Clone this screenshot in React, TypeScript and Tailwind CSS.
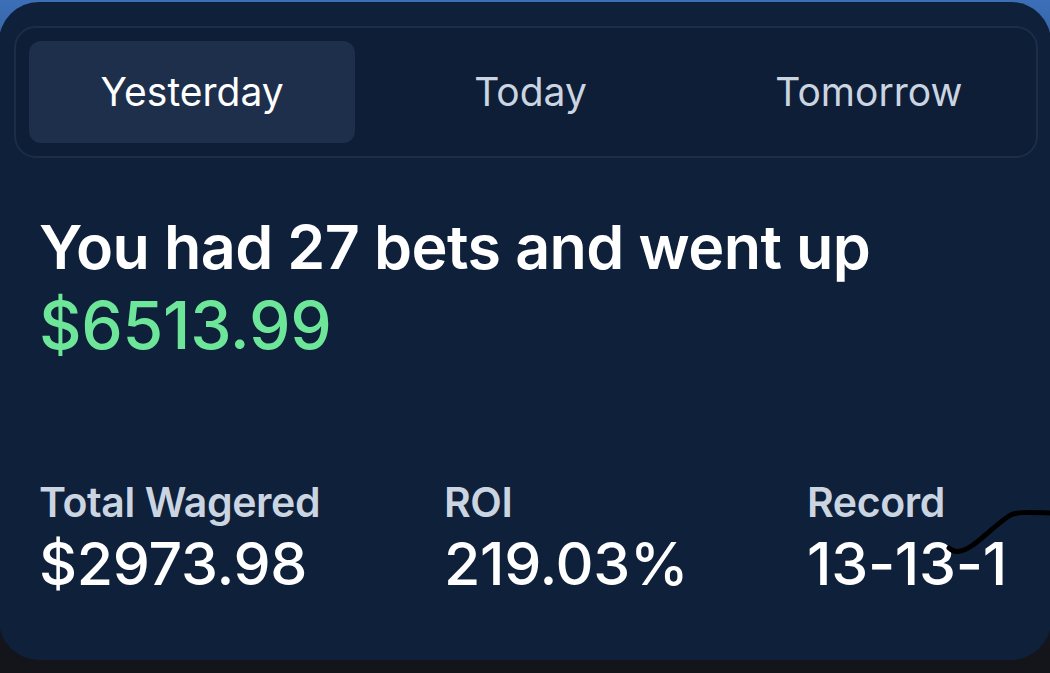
import React, { useState } from "react";

const tabs = ["Yesterday", "Today", "Tomorrow"];

const stats = [
  { label: "Total Wagered", value: "$2973.98", width: "w-[405px]" },
  { label: "ROI", value: "219.03%", width: "w-[363px]" },
  { label: "Record", value: "13-13-1", width: "flex-1" },
];

const App = () => {
  const [active, setActive] = useState(0);

  return (
    <div
      className="h-[673px] w-[1050px] overflow-hidden bg-gradient-to-b from-[#3c6fb8] via-[#16233a] to-[#131419] pt-[2px]"
      style={{ fontFamily: "Inter, 'Noto Sans', sans-serif" }}
    >
      <div className="relative -ml-[1px] h-[658px] w-[1052px] rounded-[40px] bg-[#0f203a] px-[15px] pt-[24px]">
        {/* tabs */}
        <div className="flex h-[132px] w-[1024px] gap-[12px] rounded-[22px] border-2 border-[#1c2d47] bg-[#0e1e37] py-[13px] pl-[13px] pr-[4px]">
          {tabs.map((tab, i) => (
            <button
              key={tab}
              onClick={() => setActive(i)}
              className={`flex h-[102px] w-[327px] items-center justify-center rounded-[12px] text-[39px] ${
                active === i ? "bg-[#1e2f4b] text-white" : "text-[#cbd5e1]"
              }`}
            >
              {tab}
            </button>
          ))}
        </div>

        {/* summary */}
        <div className="mt-[50px] pl-[25px]">
          <h1 className="text-[61px] font-semibold leading-[78px] tracking-[-0.6px] text-white">
            You had 27 bets and went up
          </h1>
          <p className="text-[66px] font-medium leading-[78px] tracking-[-0.3px] text-[#6ee69a]">
            $6513.99
          </p>
        </div>

        {/* stats */}
        <div className="mt-[114px] flex pl-[25px]">
          {stats.map((s) => (
            <div key={s.label} className={s.width}>
              <p className="text-[41px] font-semibold leading-[48px] tracking-[-0.4px] text-[#cbd5e1]">
                {s.label}
              </p>
              <p className="mt-[5px] text-[59px] font-medium leading-[66px] tracking-[-0.3px] text-white">
                {s.value}
              </p>
            </div>
          ))}
        </div>

        {/* pen mark */}
        <svg
          className="absolute left-[940px] top-[500px]"
          width="112"
          height="60"
          viewBox="0 0 112 60"
          fill="none"
        >
          <path
            d="M10 46 C16 52 24 50 34 43 C46 34 58 22 70 14 C76 10 86 10 112 11"
            stroke="#000"
            strokeWidth="5"
            strokeLinecap="round"
          />
        </svg>
      </div>
    </div>
  );
};

export default App;
